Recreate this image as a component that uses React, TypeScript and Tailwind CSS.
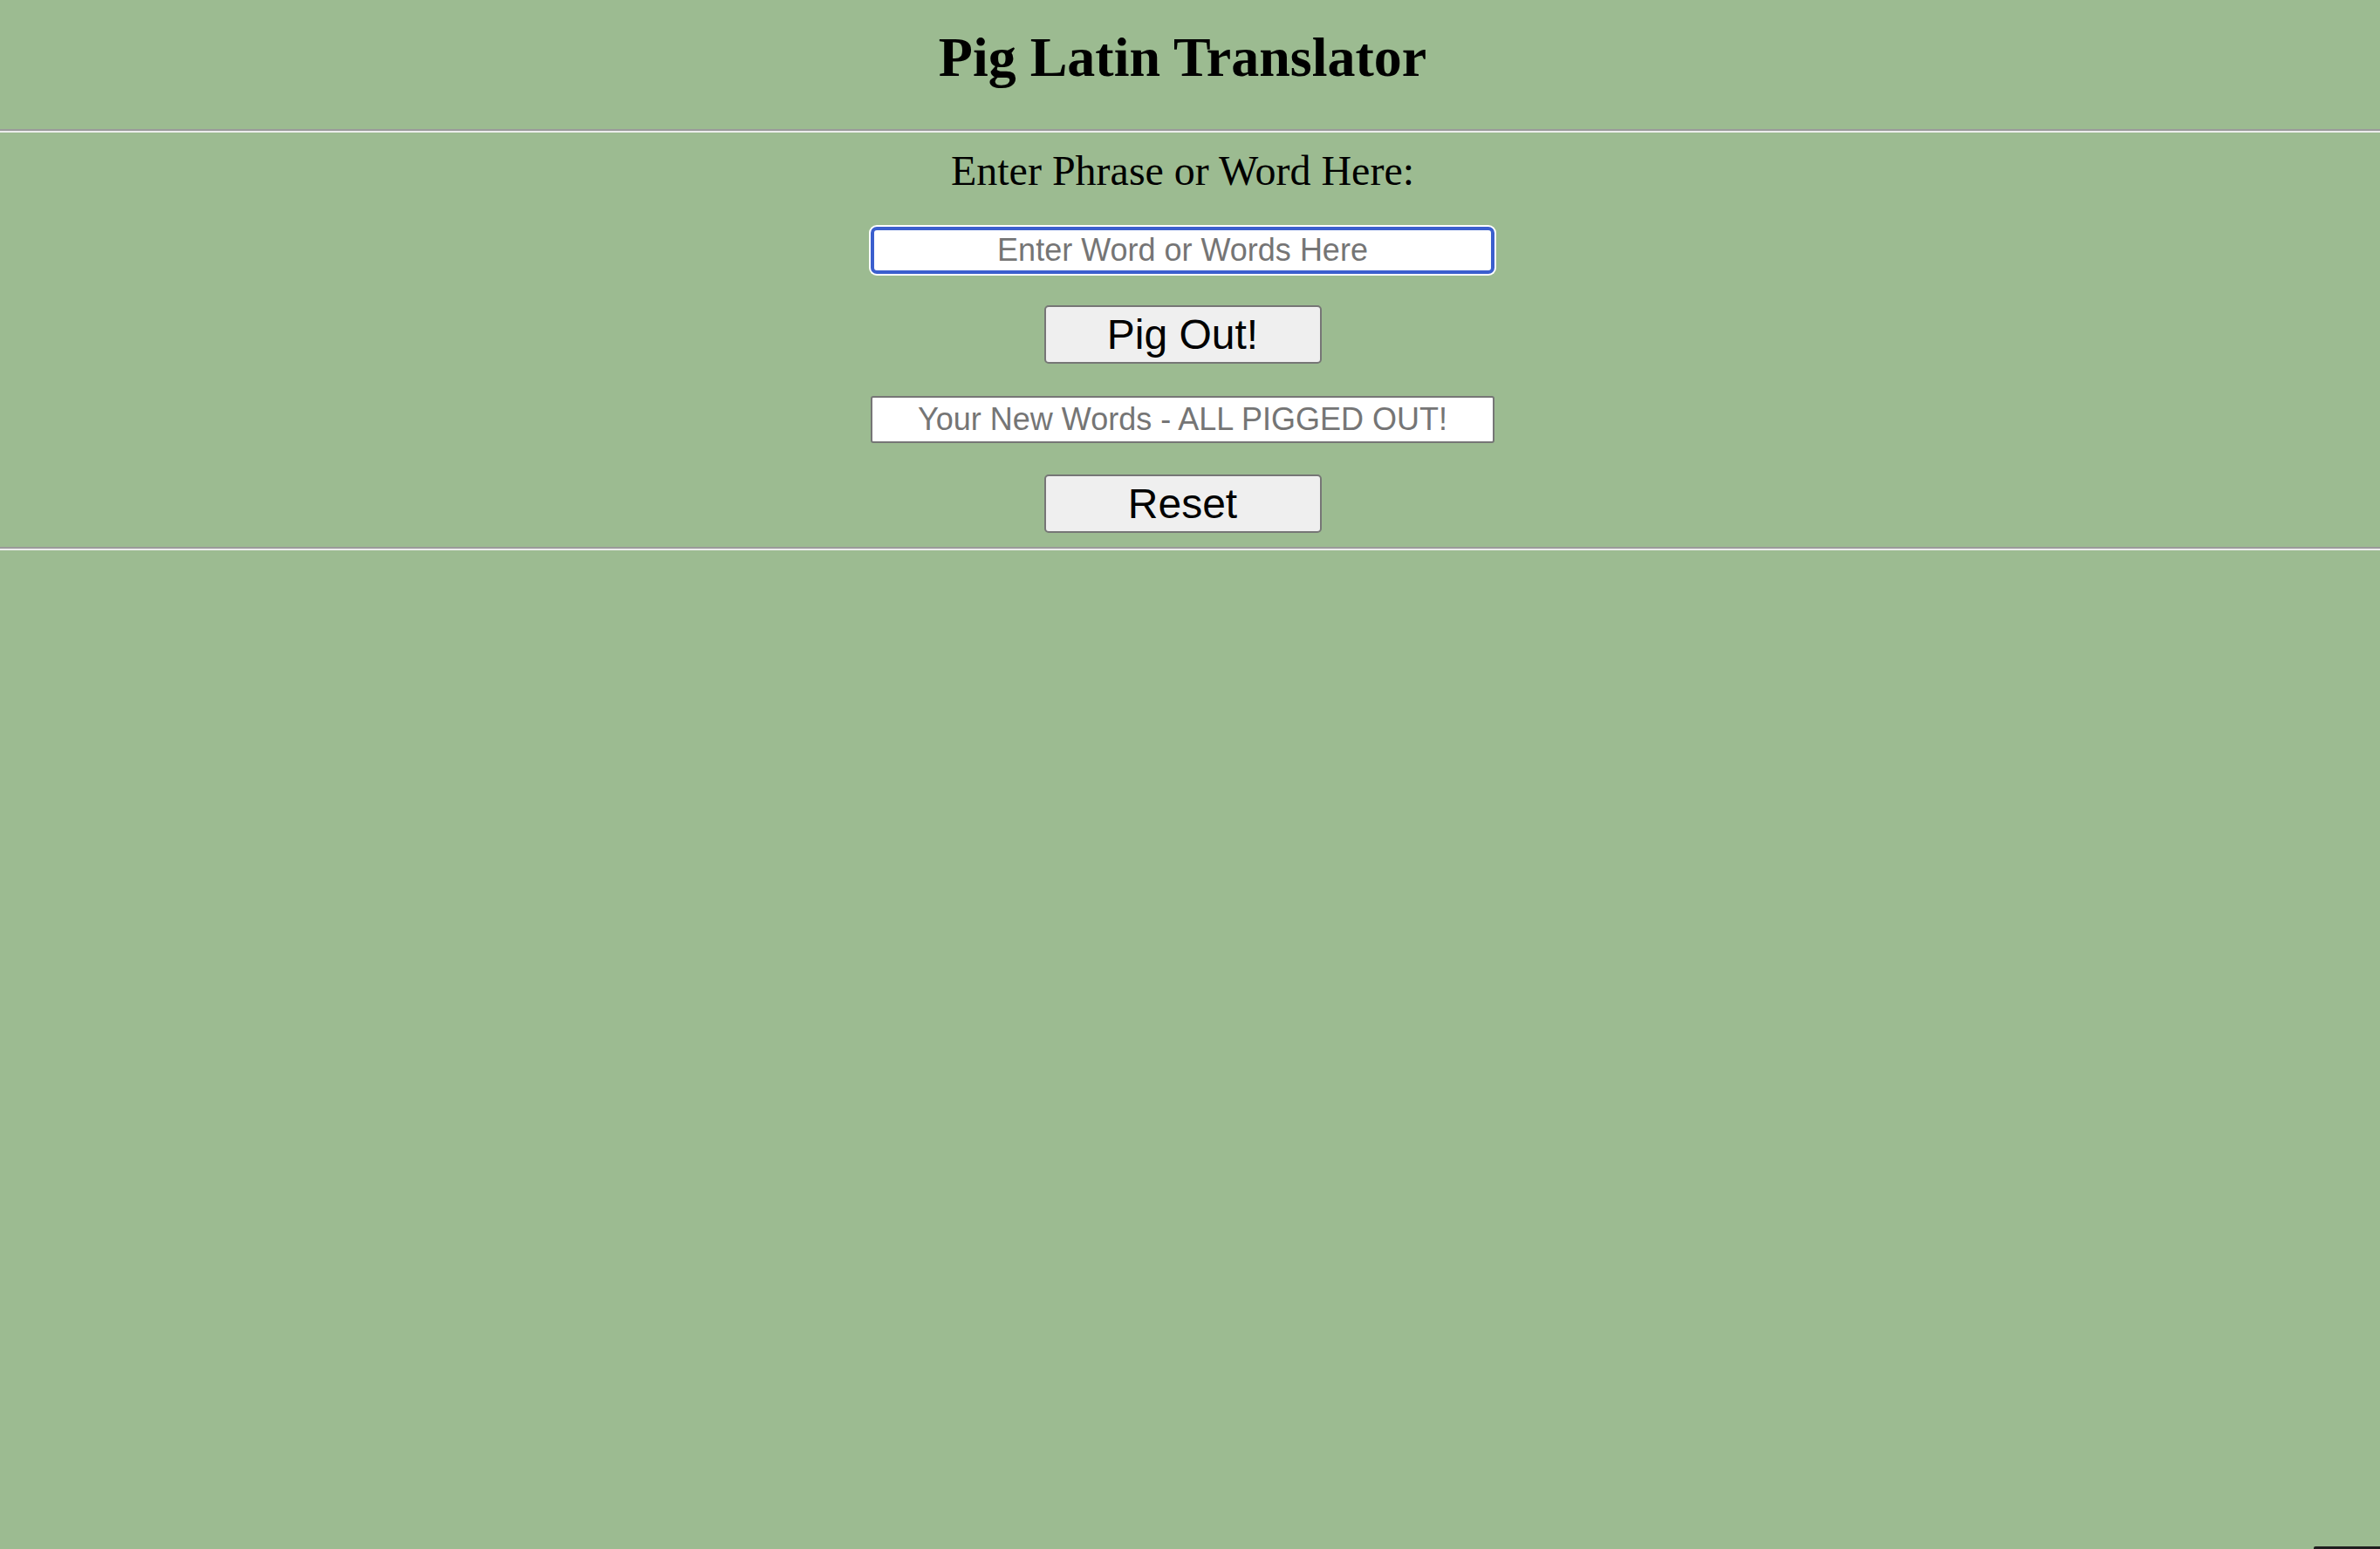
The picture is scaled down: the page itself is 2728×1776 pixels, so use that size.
import React from "react";

export default function App() {
  return (
    <div className="relative min-h-screen w-full bg-[#9cbb91]">
      <div className="flex justify-center pr-[17px] pt-[34px] pb-[50px]">
        <h1 className="font-['Liberation_Serif',serif] text-[64px] font-bold leading-[64px] text-black">
          Pig Latin Translator
        </h1>
      </div>
      <div className="h-[4px] w-full border-t-2 border-b-2 border-t-[#9a9a9a] border-b-[#ececec]" />
      <div className="flex flex-col items-center pr-[17px] pt-[20px] pb-[16px]">
        <label className="font-['Liberation_Serif',serif] text-[48px] leading-[48px] text-black">
          Enter Phrase or Word Here:
        </label>
        <input
          type="text"
          placeholder="Enter Word or Words Here"
          className="mt-[40px] h-[54px] w-[715px] rounded-[7px] border-4 border-[#3b5fce] bg-white text-center font-['Liberation_Sans',Arial,sans-serif] text-[36px] text-black shadow-[0_0_0_2px_#ffffff] outline-none placeholder:text-[#757575]"
        />
        <button
          type="button"
          className="mt-[36px] flex h-[67px] w-[318px] items-center justify-center rounded-[5px] border-2 border-[#767676] bg-[#efefef] font-['Liberation_Sans',Arial,sans-serif] text-[48px] leading-none text-black"
        >
          Pig Out!
        </button>
        <input
          type="text"
          placeholder="Your New Words - ALL PIGGED OUT!"
          className="mt-[37px] h-[54px] w-[715px] rounded-[3px] border-2 border-[#767676] bg-white text-center font-['Liberation_Sans',Arial,sans-serif] text-[36px] text-black outline-none placeholder:text-[#757575]"
        />
        <button
          type="button"
          className="mt-[36px] flex h-[67px] w-[318px] items-center justify-center rounded-[5px] border-2 border-[#767676] bg-[#efefef] font-['Liberation_Sans',Arial,sans-serif] text-[48px] leading-none text-black"
        >
          Reset
        </button>
      </div>
      <div className="h-[4px] w-full border-t-2 border-b-2 border-t-[#9a9a9a] border-b-[#ececec]" />
      <div className="absolute bottom-0 right-0 h-[3px] w-[76px] rounded-tl-[2px] bg-[#1e1e1e]" />
    </div>
  );
}
